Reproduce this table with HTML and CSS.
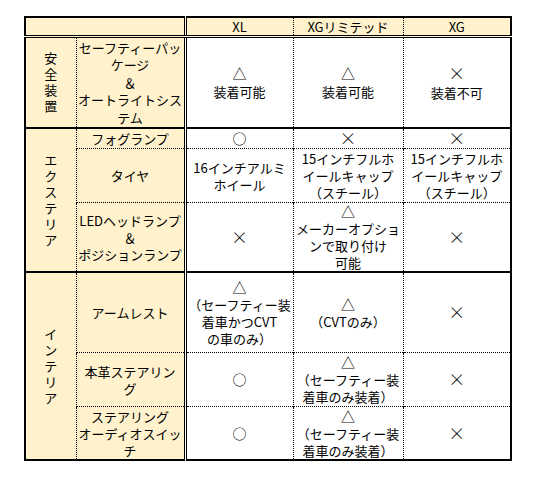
FILE: index.html
```html
<!DOCTYPE html>
<html lang="ja">
<head>
<meta charset="utf-8">
<title>装備比較表</title>
<link rel="stylesheet" href="styles.css">
</head>
<body>
<table class="spec">
  <colgroup>
    <col class="c-cat">
    <col class="c-item">
    <col class="c-xl">
    <col class="c-xgl">
    <col class="c-xg">
  </colgroup>
  <thead>
    <tr class="r-head">
      <th class="hd hd-blank" colspan="2"></th>
      <th class="hd grade first">XL</th>
      <th class="hd grade dl">XGリミテッド</th>
      <th class="hd grade dl">XG</th>
    </tr>
  </thead>
  <tbody class="grp">
    <tr class="r-safety">
      <td class="cat"><span class="vert">安全装置</span></td>
      <td class="item">セーフティーパッ<br>ケージ<br>＆<br>オートライトシス<br>テム</td>
      <td class="val first"><span class="sym">△</span><br>装着可能</td>
      <td class="val dl"><span class="sym">△</span><br>装着可能</td>
      <td class="val dl"><span class="sym x">×</span><br>装着不可</td>
    </tr>
  </tbody>
  <tbody class="grp">
    <tr class="r-fog">
      <td class="cat" rowspan="3"><span class="vert">エクステリア</span></td>
      <td class="item">フォグランプ</td>
      <td class="val first"><span class="sym">○</span></td>
      <td class="val dl"><span class="sym x">×</span></td>
      <td class="val dl"><span class="sym x">×</span></td>
    </tr>
    <tr class="r-tire sub">
      <td class="item">タイヤ</td>
      <td class="val first">16インチアルミ<br>ホイール</td>
      <td class="val dl">15インチフルホ<br>イールキャップ<br>（スチール）</td>
      <td class="val dl">15インチフルホ<br>イールキャップ<br>（スチール）</td>
    </tr>
    <tr class="r-led sub">
      <td class="item">LEDヘッドランプ<br>＆<br>ポジションランプ</td>
      <td class="val first"><span class="sym x">×</span></td>
      <td class="val dl"><span class="sym">△</span><br>メーカーオプショ<br>ンで取り付け<br>可能</td>
      <td class="val dl"><span class="sym x">×</span></td>
    </tr>
  </tbody>
  <tbody class="grp">
    <tr class="r-arm">
      <td class="cat" rowspan="3"><span class="vert">インテリア</span></td>
      <td class="item">アームレスト</td>
      <td class="val first"><span class="sym">△</span><br>（セーフティー装<br>着車かつCVT<br>の車のみ）</td>
      <td class="val dl"><span class="sym">△</span><br>（CVTのみ）</td>
      <td class="val dl"><span class="sym x">×</span></td>
    </tr>
    <tr class="r-leather sub">
      <td class="item">本革ステアリン<br>グ</td>
      <td class="val first"><span class="sym">○</span></td>
      <td class="val dl"><span class="sym">△</span><br>（セーフティー装<br>着車のみ装着）</td>
      <td class="val dl"><span class="sym x">×</span></td>
    </tr>
    <tr class="r-audio sub">
      <td class="item">ステアリング<br>オーディオスイッ<br>チ</td>
      <td class="val first"><span class="sym">○</span></td>
      <td class="val dl"><span class="sym">△</span><br>（セーフティー装<br>着車のみ装着）</td>
      <td class="val dl"><span class="sym x">×</span></td>
    </tr>
  </tbody>
</table>
</body>
</html>
```

FILE: styles.css
```css
html, body {
  margin: 0;
  padding: 0;
  background: #ffffff;
}

body {
  font-family: "Noto Sans CJK JP", "Noto Sans", sans-serif;
  font-size: 13px;
  line-height: 17px;
  color: #000000;
}

.spec {
  border-collapse: collapse;
  table-layout: fixed;
  margin: 16px 0 0 24px;
  width: 487px;
  border: 2px solid #000;
}

.c-cat { width: 51px; }
.c-item { width: 109px; }
.c-xl { width: 108px; }
.c-xgl { width: 110px; }
.c-xg { width: 108px; }

.spec th,
.spec td {
  padding: 0;
  text-align: center;
  vertical-align: middle;
  white-space: nowrap;
  font-weight: normal;
  overflow: visible;
}

.hd {
  background: #fff2cc;
  border-bottom: 3px double #000;
  height: 16px;
}

.cat,
.item {
  background: #fff2cc;
}

.item {
  border-left: 1px dotted #000;
}

.val {
  background: #ffffff;
}

.first {
  border-left: 3px double #000;
}

.dl {
  border-left: 1px dotted #000;
}

.grp {
  border-top: 2px solid #000;
}

.sub td {
  border-top: 1px dotted #000;
}

.vert {
  display: inline-block;
  width: 1em;
  white-space: normal;
  word-break: break-all;
  line-height: 16px;
}

.sym {
  font-size: 14px;
  line-height: 17px;
}

.x {
  font-size: 17px;
  font-weight: 300;
  line-height: 17px;
}

.r-safety td { height: 89px; line-height: 17.5px; }
.r-fog td { height: 16px; }
.r-tire td { height: 53px; }
.r-led td { height: 68px; }
.r-arm td { height: 79px; }
.r-leather td { height: 53px; }
.r-audio td { height: 52px; }
```
